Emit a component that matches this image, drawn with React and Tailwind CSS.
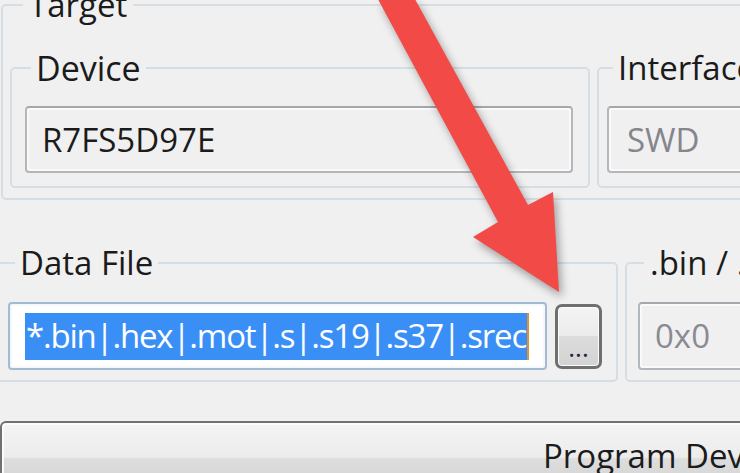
export default function App() {
  return (
    <div className="relative w-[740px] h-[473px] overflow-hidden bg-[#f0f0f0] text-[#1b1b1b] font-['Open_Sans','Noto_Sans',sans-serif] text-[33px]">
      {/* Target group */}
      <fieldset className="ml-[1px] -mt-[18px] w-[900px] min-w-0 border-2 border-[#d6dee5] rounded-[5px] pl-[7px] pt-[17px] pb-[10px]">
        <legend className="ml-[13px] px-[6px] leading-[46px]">Target</legend>
        <div className="flex gap-[7px]">
          <fieldset className="w-[580px] shrink-0 min-w-0 border-2 border-[#d6dee5] rounded-[5px] pl-[13px] pt-[15px] pb-[13px]">
            <legend className="ml-[6px] px-[5px] leading-[46px] text-[34px]">Device</legend>
            <div className="h-[67px] w-[548px] border-2 border-[#b3b6bb] border-t-[#a4a7ac] rounded-[4px] bg-[#f0f0f0] shadow-[inset_0_0_0_2px_#fafafa] flex items-center pl-[15px]">
              R7FS5D97E
            </div>
          </fieldset>
          <fieldset className="w-[300px] shrink-0 min-w-0 border-2 border-[#d6dee5] rounded-[5px] pl-[8px] pt-[15px] pb-[13px]">
            <legend className="ml-[6px] px-[5px] leading-[46px]">Interface</legend>
            <div className="h-[67px] w-[300px] border-2 border-[#b3b6bb] border-t-[#a4a7ac] rounded-[4px] bg-[#f0f0f0] shadow-[inset_0_0_0_2px_#fafafa] flex items-center pl-[18px] text-[#85868c]">
              SWD
            </div>
          </fieldset>
        </div>
      </fieldset>

      {/* Data file row */}
      <div className="flex gap-[7px] mt-[40px] -ml-[4px]">
        <fieldset className="w-[622px] shrink-0 min-w-0 border-2 border-[#d6dee5] rounded-[5px] pl-[10px] pt-[16px] pb-[10px]">
          <legend className="ml-[7px] px-[5px] leading-[46px]">Data File</legend>
          <div className="flex items-center gap-[8px]">
            <div className="h-[68px] w-[539px] shrink-0 overflow-hidden border-2 border-[#a4bad2] rounded-[4px] bg-white shadow-[inset_0_0_0_2px_#f4f8fc] flex items-center pl-[15px]">
              <span className="h-[47px] flex items-center bg-[#3a8ff6] text-white pl-[1px] pr-[1px] border-r-2 border-[#e09030] whitespace-nowrap tracking-[-1.2px]">
                *.bin|.hex|.mot|.s|.s19|.s37|.srec
              </span>
            </div>
            <div className="h-[65px] w-[47px] shrink-0 border-[3px] border-[#6f6f6f] rounded-[7px] bg-[linear-gradient(#f3f3f3_0%,#ececec_48%,#dcdcdc_50%,#d3d3d3_100%)] shadow-[inset_0_0_0_1px_#fbfbfb] flex items-end justify-center pb-[6px] leading-none text-[26px] text-[#302040]">
              ...
            </div>
          </div>
        </fieldset>
        <fieldset className="w-[300px] shrink-0 min-w-0 border-2 border-[#d6dee5] rounded-[5px] pl-[11px] pt-[16px] pb-[10px]">
          <legend className="ml-[6px] px-[6px] leading-[46px]">.bin / .hex offset</legend>
          <div className="h-[68px] w-[300px] border-2 border-[#b3b6bb] border-t-[#a4a7ac] rounded-[4px] bg-[#f0f0f0] shadow-[inset_0_0_0_2px_#fafafa] flex items-center pl-[15px] text-[#8a8a95]">
            0x0
          </div>
        </fieldset>
      </div>

      {/* Program button */}
      <div className="mt-[39px] ml-[0px] w-[900px] h-[80px] border-2 border-[#707070] rounded-tl-[6px] bg-[linear-gradient(#f4f4f4_0%,#ececec_45%,#dddddd_47%,#cfcfcf_100%)] shadow-[inset_0_0_0_2px_#fbfbfb] pl-[541px] pt-[10px] leading-[46px] whitespace-nowrap">
        Program Device
      </div>

      {/* Red arrow overlay */}
      <svg className="absolute inset-0 pointer-events-none drop-shadow-[3px_5px_4px_rgba(0,0,0,0.35)]" width="740" height="473" viewBox="0 0 740 473">
        <polygon points="373,-10 410,-10 528,205 553,192 559,292 473,237 498,222" fill="#f24a47" />
      </svg>
    </div>
  );
}
